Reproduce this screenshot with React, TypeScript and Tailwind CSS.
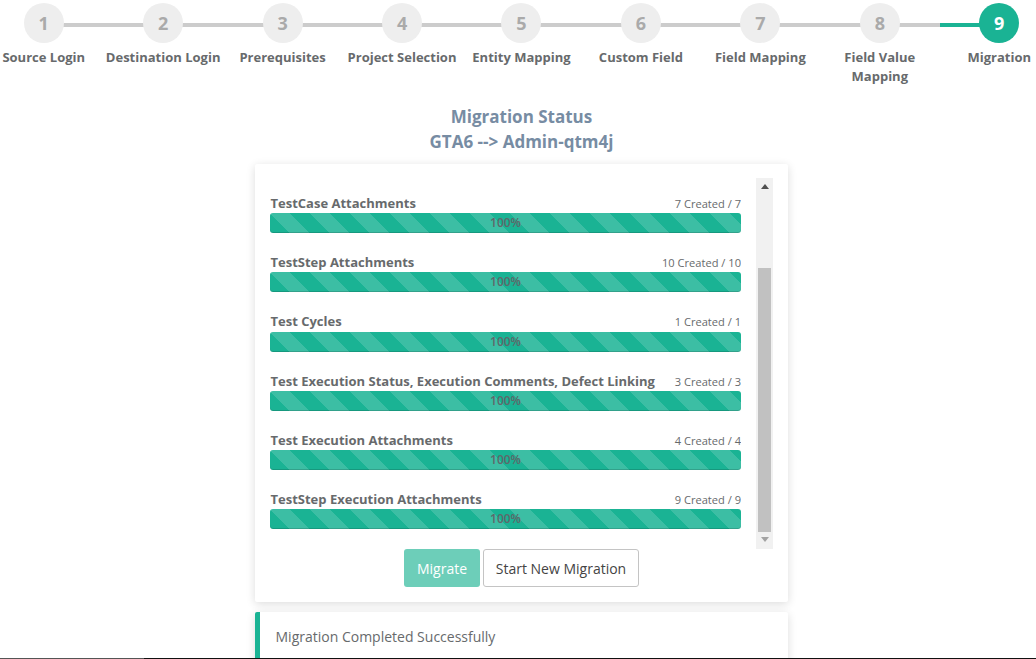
const steps = [
  "Source Login",
  "Destination Login",
  "Prerequisites",
  "Project Selection",
  "Entity Mapping",
  "Custom Field",
  "Field Mapping",
  "Field Value Mapping",
  "Migration",
];

const rows = [
  { name: "TestCase Attachments", count: "7 Created / 7" },
  { name: "TestStep Attachments", count: "10 Created / 10" },
  { name: "Test Cycles", count: "1 Created / 1" },
  { name: "Test Execution Status, Execution Comments, Defect Linking", count: "3 Created / 3" },
  { name: "Test Execution Attachments", count: "4 Created / 4" },
  { name: "TestStep Execution Attachments", count: "9 Created / 9" },
];

function Step({ label, index }: { label: string; index: number }) {
  const active = index === 8;
  return (
    <div className="relative flex w-[119.44px] shrink-0 flex-col items-center">
      {index > 0 && (
        <div className={`absolute left-0 top-[20px] h-1 w-1/2 ${active ? "bg-[#1ab394]" : "bg-[#cccccc]"}`} />
      )}
      {index < 8 && <div className="absolute right-0 top-[20px] h-1 w-1/2 bg-[#cccccc]" />}
      <div
        className={`relative flex h-10 w-10 items-center justify-center rounded-full text-[18px] font-bold ${
          active ? "bg-[#1ab394] text-white" : "bg-[#eeeeee] text-[#aaaaaa]"
        }`}
      >
        {index + 1}
      </div>
      <div className="mt-[5px] w-[118px] text-center text-[13px] font-bold leading-[19px] text-[#676a6c]">{label}</div>
    </div>
  );
}

function ProgressRow({ name, count }: { name: string; count: string }) {
  return (
    <div className="mb-[20px]">
      <div className="flex h-[19.25px] items-start justify-between">
        <span className="pl-[0.5px] text-[13px] font-bold leading-[19px] text-[#676a6c]">{name}</span>
        <span className="mt-px text-[11.1px] leading-[18px] text-[#676a6c]">{count}</span>
      </div>
      <div className="relative flex h-5 items-center justify-center rounded-[3px] bg-[#1ab394] bg-[linear-gradient(45deg,rgba(255,255,255,.15)_25%,transparent_25%,transparent_50%,rgba(255,255,255,.15)_50%,rgba(255,255,255,.15)_75%,transparent_75%,transparent)] bg-[length:40px_40px] text-[12px] font-semibold text-[#5f686a] shadow-[inset_0_-1px_0_rgba(0,0,0,.15)]">
        <span className="absolute left-[-1px] top-[1px] h-px w-px bg-[#333333]" />
        <span className="absolute bottom-[2px] left-[-1px] h-px w-px bg-[#333333]" />
        100%
      </div>
    </div>
  );
}

export default function App() {
  return (
    <div className="flex h-[659px] w-[1036px] flex-col overflow-hidden bg-white font-['Open_Sans',sans-serif]">
      <div className="ml-[-16px] flex h-[99px] shrink-0 pt-[3px]">
        {steps.map((s, i) => (
          <Step key={s} label={s} index={i} />
        ))}
      </div>

      <div className="ml-[255px] flex min-h-0 w-[533px] flex-1 flex-col">
        <h2 className="pt-[5px] text-center text-[17px] font-bold leading-[25px] text-[#778ca3]">
          Migration Status
          <br />
          GTA6 --&gt; Admin-qtm4j
        </h2>

        <div className="mt-[10px] h-[438px] shrink-0 rounded-[2px] bg-white pl-[15px] pr-[15px] pt-[14px] shadow-[0_2px_10px_rgba(0,0,0,.14)]">
          <div className="flex h-[371px] justify-between">
            <div className="w-[471px] overflow-hidden pt-[15.8px]">
              {rows.map((r) => (
                <ProgressRow key={r.name} name={r.name} count={r.count} />
              ))}
            </div>
            <div className="flex w-[17px] flex-col items-center bg-[#f1f1f1]">
              <svg className="mt-[6px] shrink-0" width="8" height="5" viewBox="0 0 8 5">
                <path d="M4 0 8 5H0z" fill="#505050" />
              </svg>
              <div className="mt-[79px] h-[264px] w-[13px] shrink-0 bg-[#c1c1c1]" />
              <svg className="mt-[5px] shrink-0" width="8" height="5" viewBox="0 0 8 5">
                <path d="M0 0h8L4 5z" fill="#a3a3a3" />
              </svg>
            </div>
          </div>
          <div className="mt-0 flex justify-center gap-[3px]">
            <button className="h-[38px] w-[76px] rounded-[3px] bg-[#6dceb9] text-[14px] text-white">Migrate</button>
            <button className="h-[38px] w-[156px] rounded-[3px] border border-[#c4c4c4] bg-white text-[14px] text-[#444444]">
              Start New Migration
            </button>
          </div>
        </div>

        <div className="mt-[10px] flex h-[60px] shrink-0 items-start rounded-[2px] border-l-[5px] border-[#1ab394] bg-white pl-[15.5px] pt-[15px] text-[14px] leading-[20px] text-[#676a6c] shadow-[0_2px_10px_rgba(0,0,0,.14)]">
          Migration Completed Successfully
        </div>
      </div>
      <div className="flex h-px shrink-0 bg-[#111111]">
        <div className="w-[144px] bg-[#555555]" />
      </div>
    </div>
  );
}
